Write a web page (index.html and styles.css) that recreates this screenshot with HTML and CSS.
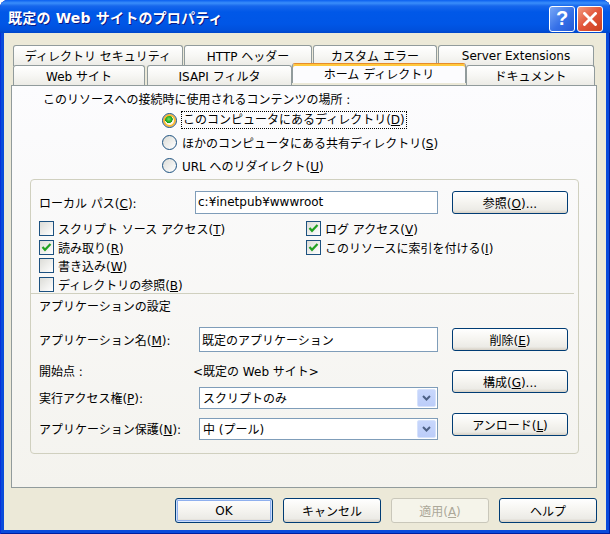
FILE: index.html
```html
<!DOCTYPE html>
<html lang="ja">

<head>
    <meta charset="UTF-8">
    <title>既定の Web サイトのプロパティ</title>
    <link rel="stylesheet" href="styles.css">
</head>

<body>
    <div class="window">
        <div class="titlebar">
            <span class="title">既定の Web サイトのプロパティ</span>
            <div class="caption-buttons">
                <span class="cap-btn help">?</span>
                <span class="cap-btn close">
                    <svg width="14" height="14" viewBox="0 0 14 14">
                        <path d="M1.5 1.5 L12.5 12.5 M12.5 1.5 L1.5 12.5" stroke="#fff" stroke-width="2.8" stroke-linecap="square" fill="none"/>
                    </svg>
                </span>
            </div>
        </div>

        <div class="client">
            <div class="tabs">
                <div class="tab-row back">
                    <div class="tab t-dirsec">ディレクトリ セキュリティ</div>
                    <div class="tab t-http">HTTP ヘッダー</div>
                    <div class="tab t-error">カスタム エラー</div>
                    <div class="tab t-ext">Server Extensions</div>
                </div>
                <div class="tab-row front">
                    <div class="tab t-web">Web サイト</div>
                    <div class="tab t-isapi">ISAPI フィルタ</div>
                    <div class="tab t-home active">ホーム ディレクトリ</div>
                    <div class="tab t-doc">ドキュメント</div>
                </div>
            </div>

            <div class="pane">
                <p class="caption">このリソースへの接続時に使用されるコンテンツの場所 :</p>
                <div class="radio-list">
                    <div class="radio-row">
                        <span class="radio checked hot"></span>
                        <span class="focus">このコンピュータにあるディレクトリ(<u>D</u>)</span>
                    </div>
                    <div class="radio-row">
                        <span class="radio"></span>
                        <span>ほかのコンピュータにある共有ディレクトリ(<u>S</u>)</span>
                    </div>
                    <div class="radio-row">
                        <span class="radio"></span>
                        <span>URL へのリダイレクト(<u>U</u>)</span>
                    </div>
                </div>

                <div class="groupbox">
                    <div class="path-row">
                        <span class="label">ローカル パス(<u>C</u>):</span>
                        <div class="textbox path">c:¥inetpub¥wwwroot</div>
                        <button class="btn side">参照(<u>O</u>)...</button>
                    </div>

                    <div class="checks">
                        <div class="check-row"><span class="checkbox"></span><span>スクリプト ソース アクセス(<u>T</u>)</span></div>
                        <div class="check-row"><span class="checkbox checked"><svg width="13" height="13" viewBox="0 0 13 13"><path d="M2.5 6 L5 8.8 L10.5 3" stroke="#21A121" stroke-width="2.2" fill="none"/></svg></span><span>読み取り(<u>R</u>)</span></div>
                        <div class="check-row"><span class="checkbox"></span><span>書き込み(<u>W</u>)</span></div>
                        <div class="check-row"><span class="checkbox"></span><span>ディレクトリの参照(<u>B</u>)</span></div>
                        <div class="check-row"><span class="checkbox checked"><svg width="13" height="13" viewBox="0 0 13 13"><path d="M2.5 6 L5 8.8 L10.5 3" stroke="#21A121" stroke-width="2.2" fill="none"/></svg></span><span>ログ アクセス(<u>V</u>)</span></div>
                        <div class="check-row"><span class="checkbox checked"><svg width="13" height="13" viewBox="0 0 13 13"><path d="M2.5 6 L5 8.8 L10.5 3" stroke="#21A121" stroke-width="2.2" fill="none"/></svg></span><span>このリソースに索引を付ける(<u>I</u>)</span></div>
                    </div>

                    <div class="separator"></div>
                    <div class="section-title">アプリケーションの設定</div>

                    <div class="app-section">
                        <div class="app-fields">
                            <div class="field-row name-row">
                                <span class="label wide">アプリケーション名(<u>M</u>):</span>
                                <div class="textbox app-name">既定のアプリケーション</div>
                            </div>
                            <div class="field-row start-row">
                                <span class="label wide">開始点 :</span>
                                <span class="start-value">&lt;既定の Web サイト&gt;</span>
                            </div>
                            <div class="field-row exec-row">
                                <span class="label wide">実行アクセス権(<u>P</u>):</span>
                                <div class="select">
                                    <span class="select-text">スクリプトのみ</span>
                                    <span class="drop"><svg width="9" height="6" viewBox="0 0 9 6"><path d="M1 1 L4.5 4.5 L8 1" stroke="#4D6185" stroke-width="2" fill="none"/></svg></span>
                                </div>
                            </div>
                            <div class="field-row protect-row">
                                <span class="label wide">アプリケーション保護(<u>N</u>):</span>
                                <div class="select">
                                    <span class="select-text">中 (プール)</span>
                                    <span class="drop"><svg width="9" height="6" viewBox="0 0 9 6"><path d="M1 1 L4.5 4.5 L8 1" stroke="#4D6185" stroke-width="2" fill="none"/></svg></span>
                                </div>
                            </div>
                        </div>
                        <div class="app-buttons">
                            <button class="btn side b-remove">削除(<u>E</u>)</button>
                            <button class="btn side b-config">構成(<u>G</u>)...</button>
                            <button class="btn side b-unload">アンロード(<u>L</u>)</button>
                        </div>
                    </div>
                </div>
            </div>

            <div class="dialog-buttons">
                <button class="btn default">OK</button>
                <button class="btn">キャンセル</button>
                <button class="btn" disabled>適用(<u>A</u>)</button>
                <button class="btn">ヘルプ</button>
            </div>
        </div>
    </div>
</body>

</html>
```

FILE: styles.css
```css
* {
    box-sizing: border-box;
}

body {
    margin: 0;
    font-family: "DejaVu Sans", "Noto Sans CJK JP", sans-serif;
    font-size: 12px;
    color: #000;
    background: #fff;
}

.window {
    width: 610px;
    height: 534px;
    display: flex;
    flex-direction: column;
    background: #0A4BDB;
    border-radius: 8px 8px 0 0;
    overflow: hidden;
    box-shadow: inset 1px 0 #0831D9, inset -1px 0 #001EA0, inset 0 -1px #001EA0;
}

/* title bar */
.titlebar {
    height: 33px;
    flex-shrink: 0;
    display: flex;
    align-items: center;
    justify-content: space-between;
    padding: 0 7px 0 8px;
    background: linear-gradient(#0A5FF0 0, #3A8EFA 3px, #1767EC 6px, #0058E8 12px, #0056E6 24px, #0050DC 30px, #0046C9 33px);
}

.title {
    color: #fff;
    font-weight: bold;
    font-size: 14px;
    text-shadow: 1px 1px 0 #0A1883;
    letter-spacing: 0.2px;
}

.caption-buttons {
    display: flex;
    gap: 2px;
    margin-top: 4px;
}

.cap-btn {
    width: 26px;
    height: 26px;
    border: 1px solid #fff;
    border-radius: 3px;
    display: flex;
    align-items: center;
    justify-content: center;
}

.help {
    background: linear-gradient(135deg, #79A8F6, #3570E8 55%, #2459D6);
    color: #fff;
    font: bold 20px "Liberation Sans", sans-serif;
}

.close {
    background: linear-gradient(135deg, #F29B80, #E2553A 50%, #C9401F);
}

/* client area */
.client {
    flex: 1;
    margin: 0 4px 4px;
    background: #ECE9D8;
    padding: 12px 9px 0 7px;
    display: flex;
    flex-direction: column;
}

.tabs {
    height: 40px;
    position: relative;
    z-index: 1;
}

.tab-row {
    display: flex;
    height: 20px;
    padding-left: 2px;
}

.tab-row.back {
    gap: 1px;
}

.tab {
    height: 21px;
    border: 1px solid #919B9C;
    border-bottom: none;
    border-radius: 3px 3px 0 0;
    background: linear-gradient(#FFFFFF, #F7F7F4 50%, #ECEBE6);
    display: flex;
    align-items: center;
    justify-content: center;
    white-space: nowrap;
    padding-bottom: 1px;
}

.tab-row.front .tab {
    height: 20px;
}

.t-dirsec { width: 170px; }
.t-http { width: 128px; }
.t-error { width: 124px; }
.t-ext { width: 156px; }
.t-web { width: 132px; }
.t-isapi { width: 145px; margin-left: 2px; }
.t-doc { width: 129px; }

.tab.t-home {
    width: 174px;
    height: 23px;
    margin-top: -2px;
    background: #FCFCFE;
    border-top: 1px solid #E68B2C;
    box-shadow: inset 0 2px 0 #FFC83C;
    padding-top: 1px;
}

.pane {
    height: 403px;
    border: 1px solid #919B9C;
    background: linear-gradient(#FCFCFE, #F4F3EE);
}

.caption {
    margin: 5px 0 0 31px;
    line-height: 18px;
}

.radio-list {
    margin-left: 150px;
}

.radio-row {
    height: 22.5px;
    display: flex;
    align-items: center;
    gap: 5px;
}

.radio {
    width: 15px;
    height: 15px;
    border: 1px solid #1C5180;
    border-radius: 50%;
    background: linear-gradient(135deg, #DCDCD7, #FFFFFF);
    flex-shrink: 0;
}

.radio.hot {
    box-shadow: inset 0 0 0 2px #F8B636;
}

.radio.checked {
    background: radial-gradient(circle at 45% 40%, #72E46C 0, #2CB42A 2.5px, #16981A 3.6px, transparent 4px), linear-gradient(135deg, #FDEFC9, #FFFFFF);
}

.focus {
    outline: 1px dotted #000;
    padding: 0 1px;
    line-height: 16px;
}

/* group box */
.groupbox {
    margin: 2.5px 0 0 18px;
    width: 549px;
    height: 275px;
    border: 1px solid #D0D0BF;
    border-radius: 4px;
}

.path-row {
    display: flex;
    align-items: center;
    height: 24px;
    margin-top: 10px;
    padding-left: 8px;
}

.label {
    width: 156px;
    flex-shrink: 0;
    white-space: nowrap;
}

.label.wide {
    width: 160px;
}

.textbox {
    height: 23px;
    border: 1px solid #7F9DB9;
    background: #fff;
    display: flex;
    align-items: center;
    padding-left: 2px;
    white-space: nowrap;
}

.textbox.path {
    width: 243px;
}

.textbox.app-name {
    width: 239px;
    height: 25px;
}

.btn {
    font: inherit;
    color: #000;
    border: 1px solid #003C74;
    border-radius: 3px;
    background: linear-gradient(#FFFFFF, #F6F5F1 45%, #ECEBE6 85%, #D6D0C5);
    padding: 0;
    white-space: nowrap;
}

.btn.side {
    width: 116px;
    height: 23px;
    margin-left: 14px;
}

.btn:disabled {
    color: #ACA899;
    border-color: #C9C7BA;
    background: #F5F4EA;
}

.btn.default {
    box-shadow: inset 0 0 0 1px #CBDDFB, inset 0 0 0 2px #8FB0EE;
}

.checks {
    margin-top: 5px;
    padding-left: 8px;
    display: grid;
    grid-template-columns: 267px auto;
    grid-template-rows: repeat(4, 18.7px);
    grid-auto-flow: column;
}

.check-row {
    display: flex;
    align-items: center;
    gap: 4px;
    white-space: nowrap;
}

.checkbox {
    width: 15px;
    height: 15px;
    border: 1px solid #1C5180;
    background: linear-gradient(135deg, #DCDCD7, #FFFFFF);
    display: flex;
    align-items: center;
    justify-content: center;
    flex-shrink: 0;
}

.separator {
    height: 1px;
    background: #D0D0BF;
    margin: -1px 4px 0 0;
}

.section-title {
    margin-top: 4px;
    line-height: 18px;
    padding-left: 8px;
}

.app-section {
    display: flex;
    padding-left: 8px;
}

.app-fields {
    width: 399px;
}

.field-row {
    display: flex;
    align-items: center;
}

.name-row { margin-top: 11px; height: 25px; }
.start-row { margin-top: 10px; height: 18px; }
.exec-row { margin-top: 7px; height: 22px; }
.protect-row { margin-top: 9px; height: 22px; }

.start-value {
    margin-left: -6px;
    white-space: nowrap;
}

.select {
    width: 239px;
    height: 22px;
    border: 1px solid #7F9DB9;
    background: #fff;
    display: flex;
    align-items: center;
    padding: 1px;
}

.select-text {
    flex: 1;
    padding-left: 2px;
    white-space: nowrap;
}

.drop {
    width: 19px;
    height: 18px;
    border: 1px solid #D6E2FC;
    border-radius: 2px;
    background: linear-gradient(#C8D7FC, #BCCDF9);
    display: flex;
    align-items: center;
    justify-content: center;
}

.app-buttons {
    display: flex;
    flex-direction: column;
}

.b-remove { margin-top: 12px; height: 24px; }
.btn.b-config { margin-top: 19px; }
.btn.b-unload { margin-top: 20px; }

.dialog-buttons {
    display: flex;
    justify-content: flex-end;
    gap: 10px;
    margin-top: 10px;
}

.dialog-buttons .btn {
    width: 98px;
    height: 25px;
}
```
